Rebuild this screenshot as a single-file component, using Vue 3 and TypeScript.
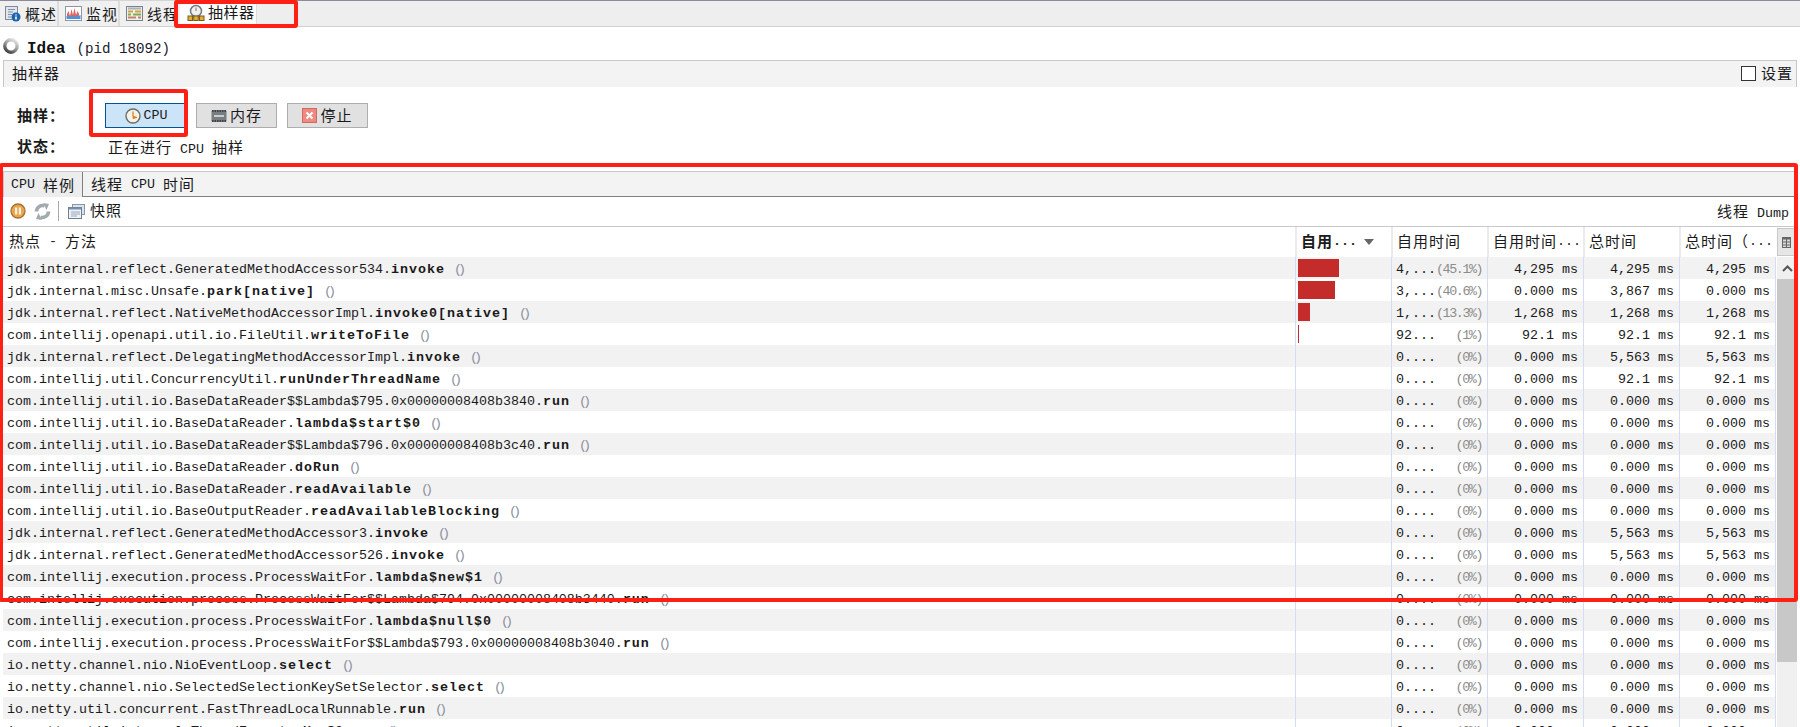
<script setup lang="ts">
interface Row {
  pre: string
  bold: string
  head: string
  pct: string
  bar: number
  self: string
  total: string
  totalCpu: string
}

const Z = '0.000 ms'
function r(pre: string, bold: string, head = '0....', pct = '(0%)', bar = 0, self = Z, total = Z, totalCpu = Z): Row {
  return { pre, bold, head, pct, bar, self, total, totalCpu }
}

const rows: Row[] = [
  r('jdk.internal.reflect.GeneratedMethodAccessor534.', 'invoke', '4,...', '(45.1%)', 41, '4,295 ms', '4,295 ms', '4,295 ms'),
  r('jdk.internal.misc.Unsafe.', 'park[native]', '3,...', '(40.6%)', 37, Z, '3,867 ms', Z),
  r('jdk.internal.reflect.NativeMethodAccessorImpl.', 'invoke0[native]', '1,...', '(13.3%)', 12, '1,268 ms', '1,268 ms', '1,268 ms'),
  r('com.intellij.openapi.util.io.FileUtil.', 'writeToFile', '92...', '(1%)', 1, '92.1 ms', '92.1 ms', '92.1 ms'),
  r('jdk.internal.reflect.DelegatingMethodAccessorImpl.', 'invoke', '0....', '(0%)', 0, Z, '5,563 ms', '5,563 ms'),
  r('com.intellij.util.ConcurrencyUtil.', 'runUnderThreadName', '0....', '(0%)', 0, Z, '92.1 ms', '92.1 ms'),
  r('com.intellij.util.io.BaseDataReader$$Lambda$795.0x00000008408b3840.', 'run'),
  r('com.intellij.util.io.BaseDataReader.', 'lambda$start$0'),
  r('com.intellij.util.io.BaseDataReader$$Lambda$796.0x00000008408b3c40.', 'run'),
  r('com.intellij.util.io.BaseDataReader.', 'doRun'),
  r('com.intellij.util.io.BaseDataReader.', 'readAvailable'),
  r('com.intellij.util.io.BaseOutputReader.', 'readAvailableBlocking'),
  r('jdk.internal.reflect.GeneratedMethodAccessor3.', 'invoke', '0....', '(0%)', 0, Z, '5,563 ms', '5,563 ms'),
  r('jdk.internal.reflect.GeneratedMethodAccessor526.', 'invoke', '0....', '(0%)', 0, Z, '5,563 ms', '5,563 ms'),
  r('com.intellij.execution.process.ProcessWaitFor.', 'lambda$new$1'),
  r('com.intellij.execution.process.ProcessWaitFor$$Lambda$794.0x00000008408b3440.', 'run'),
  r('com.intellij.execution.process.ProcessWaitFor.', 'lambda$null$0'),
  r('com.intellij.execution.process.ProcessWaitFor$$Lambda$793.0x00000008408b3040.', 'run'),
  r('io.netty.channel.nio.NioEventLoop.', 'select'),
  r('io.netty.channel.nio.SelectedSelectionKeySetSelector.', 'select'),
  r('io.netty.util.concurrent.FastThreadLocalRunnable.', 'run'),
  r('io.netty.util.internal.ThreadExecutorMap$2.', 'run'),
]
</script>

<template>
  <div class="page">
    <nav class="tabs">
      <div class="tab">
        <svg width="17" height="17" viewBox="0 0 17 17">
          <rect x="1.5" y="1.5" width="12" height="13" fill="#dfe6ee" stroke="#7d8a99" />
          <path d="M4 4.5h7M4 7h5M4 9.5h4M4 12h3" stroke="#7f8fa3" />
          <circle cx="12" cy="12" r="4.5" fill="#1f62ad" />
          <path d="M12 9.6v1M12 11.4v3" stroke="#fff" stroke-width="1.6" />
        </svg>
        <span class="zh">概述</span>
      </div>
      <div class="tab">
        <svg width="17" height="17" viewBox="0 0 17 17">
          <rect x="0.5" y="1.5" width="16" height="14" fill="#fff" stroke="#8c97a5" />
          <path d="M2 13V9l1.500-3 1.500 5 1.500-7 1.500 6 1.500-7 1.500 7 1.500-4 1.500 3v4z" fill="#e8625a" />
          <path d="M1.500 14v-3l2-1 2 2 2-2 2 2 2-2 2 1 2-1v4z" fill="#4d93d9" />
        </svg>
        <span class="zh">监视</span>
      </div>
      <div class="tab">
        <svg width="17" height="17" viewBox="0 0 17 17">
          <rect x="0.500" y="1.500" width="16" height="14" fill="#eef0ea" stroke="#77828c" />
          <path d="M2 3.500h13" stroke="#aab3bb" stroke-width="2" />
          <path d="M2 6.500h5M9 6.500h6" stroke="#d8a03c" stroke-width="2" />
          <path d="M2 9.500h3M7 9.500h8" stroke="#7cab52" stroke-width="2" />
          <path d="M2 12.500h8M12 12.500h3" stroke="#c9806a" stroke-width="2" />
        </svg>
        <span class="zh">线程</span>
      </div>
      <div class="tab active">
        <svg width="18" height="18" viewBox="0 0 18 18">
          <circle cx="9" cy="7" r="5.500" fill="#eef1f3" stroke="#6f7a85" stroke-width="1.500" />
          <path d="M9 3.500V7" stroke="#d0772a" stroke-width="1.200" />
          <path d="M3 13h12" stroke="#6b5a2a" />
          <rect x="1" y="12" width="4.500" height="4.500" fill="#e3ad3c" stroke="#7c5d14" />
          <rect x="6.750" y="12" width="4.500" height="4.500" fill="#e3ad3c" stroke="#7c5d14" />
          <rect x="12.500" y="12" width="4.500" height="4.500" fill="#e3ad3c" stroke="#7c5d14" />
        </svg>
        <span class="zh">抽样器</span>
      </div>
    </nav>

    <header class="title">
      <svg class="spinner" width="16" height="16" viewBox="0 0 16 16">
        <defs>
          <linearGradient id="ring" x1="0.800" y1="0" x2="0.200" y2="1">
            <stop offset="0" stop-color="#e4e4e4" />
            <stop offset="0.500" stop-color="#9a9a9a" />
            <stop offset="1" stop-color="#3f3f3f" />
          </linearGradient>
        </defs>
        <circle cx="8" cy="8" r="6.200" fill="none" stroke="url(#ring)" stroke-width="3.400" />
      </svg>
      <strong class="app">Idea</strong>
      <span class="pid">(pid 18092)</span>
    </header>

    <section class="section-bar">
      <span class="zh">抽样器</span>
      <label class="settings"><i class="check"></i><span class="zh">设置</span></label>
    </section>

    <section class="controls">
      <span class="label zh">抽样：</span>
      <div class="buttons">
        <button class="btn on">
          <svg width="16" height="16" viewBox="0 0 16 16">
            <circle cx="8" cy="8" r="7" fill="#f5f2e8" stroke="#6c6c66" stroke-width="1.400" />
            <path d="M8 3.500V8l4 1.500-4 1z" fill="#e0782a" stroke="#e0782a" stroke-width="0.800" />
          </svg>
          <span>CPU</span>
        </button>
        <button class="btn">
          <svg width="16" height="16" viewBox="0 0 16 16">
            <rect x="0.500" y="2" width="15" height="12" rx="1.500" fill="#777d80" />
            <path d="M1 3h14" stroke="#3e4244" stroke-width="2" stroke-dasharray="1.500 1" />
            <path d="M1 13h14" stroke="#3e4244" stroke-width="2" stroke-dasharray="1.500 1" />
            <rect x="3" y="7" width="10" height="2" fill="#c9cdcf" />
          </svg>
          <span class="zh">内存</span>
        </button>
        <button class="btn stop">
          <svg width="15" height="15" viewBox="0 0 15 15">
            <rect x="0.500" y="0.500" width="14" height="14" fill="#ee8a80" stroke="#cf6a60" />
            <path d="M4.500 4.500l6 6M10.500 4.500l-6 6" stroke="#fff" stroke-width="2" />
          </svg>
          <span class="zh">停止</span>
        </button>
      </div>
      <span class="label zh">状态：</span>
      <div class="status"><span class="zh">正在进行</span> CPU <span class="zh">抽样</span></div>
    </section>

    <div class="subtabs">
      <div class="subtab selected">CPU <span class="zh">样例</span></div>
      <div class="subtab"><span class="zh">线程</span> CPU <span class="zh">时间</span></div>
    </div>

    <div class="toolbar">
      <svg width="16" height="16" viewBox="0 0 16 16">
        <circle cx="8" cy="8" r="7" fill="#e8a651" stroke="#a9702c" stroke-width="1.300" />
        <rect x="5" y="4.500" width="2.200" height="7" fill="#fdf0dc" />
        <rect x="8.800" y="4.500" width="2.200" height="7" fill="#fdf0dc" />
      </svg>
      <svg class="refresh" width="17" height="17" viewBox="0 0 17 17">
        <path d="M2.500 8.500a6 6 0 0 1 8-5.600" fill="none" stroke="#a3aaad" stroke-width="3.600" />
        <path d="M9 0l6 1-2.500 6z" fill="#a3aaad" />
        <path d="M14.500 8.500a6 6 0 0 1-8 5.600" fill="none" stroke="#a3aaad" stroke-width="3.600" />
        <path d="M8 17l-6-1 2.500-6z" fill="#a3aaad" />
      </svg>
      <i class="sep"></i>
      <svg width="17" height="17" viewBox="0 0 17 17">
        <rect x="4.500" y="1.500" width="12" height="10" fill="#dde3ea" stroke="#8797a8" />
        <rect x="0.500" y="4.500" width="13" height="11" fill="#eef2f6" stroke="#6f8094" />
        <path d="M1 5.500h12" stroke="#7390b0" stroke-width="2" />
        <path d="M3 9h9M3 11h9M3 13h6" stroke="#9aa8b8" />
      </svg>
      <span class="zh snap">快照</span>
      <span class="dump"><span class="zh">线程</span> Dump</span>
    </div>

    <div class="table-head">
      <div class="head-row">
        <div class="hc first"><span class="zh">热点</span> - <span class="zh">方法</span></div>
        <div class="hc sorted"><b class="zh">自用</b><b class="dots">...</b><i class="caret"></i></div>
        <div class="hc"><span class="zh">自用时间</span></div>
        <div class="hc"><span class="zh">自用时间</span>...</div>
        <div class="hc"><span class="zh">总时间</span></div>
        <div class="hc"><span class="zh">总时间</span> <span class="zh">（</span>...</div>
      </div>
      <div class="columns-btn">
        <svg width="9" height="11" viewBox="0 0 9 11">
          <path d="M0 0h9v11H0z" fill="#666" />
          <path d="M1 2.500h3v2H1zM5 2.500h3v2H5zM1 5.500h3v2H1zM5 5.500h3v2H5zM1 8.500h3v1.500H1zM5 8.500h3v1.500H5z" fill="#d8d8d8" />
        </svg>
      </div>
    </div>

    <div class="table-body">
      <div class="rows">
        <div v-for="(row, i) in rows" :key="i" class="row" :class="{ shade: i % 2 === 0 }">
          <div class="cell method">{{ row.pre }}<b>{{ row.bold }}</b><span class="parens">()</span></div>
          <div class="cell barcell"><i v-if="row.bar" class="bar" :style="{ width: row.bar + 'px' }"></i></div>
          <div class="cell selfcell"><span>{{ row.head }}</span><span class="pct">{{ row.pct }}</span></div>
          <div class="cell num">{{ row.self }}</div>
          <div class="cell num">{{ row.total }}</div>
          <div class="cell num">{{ row.totalCpu }}</div>
        </div>
      </div>
      <div class="scrollbar">
        <div class="arrow">
          <svg width="11" height="7" viewBox="0 0 11 7"><path d="M1 6l4.500-4.500L10 6" fill="none" stroke="#555" stroke-width="2" /></svg>
        </div>
        <div class="thumb"></div>
      </div>
    </div>

    <i class="mark mark-tab"></i>
    <i class="mark mark-cpu"></i>
    <i class="mark mark-panel"></i>
  </div>
</template>

<style scoped>
.page {
  position: relative;
  width: 1800px;
  height: 727px;
  overflow: hidden;
  display: flex;
  flex-direction: column;
  background: #fff;
  color: #1a1a1a;
  font-family: "Liberation Mono", "Noto Sans CJK SC", monospace;
  font-size: 13.33px;
  white-space: pre;
}
svg {
  flex: none;
}
.zh {
  font-family: "Noto Sans CJK SC", sans-serif;
  font-size: 15px;
  letter-spacing: 1px;
  font-weight: 400;
  line-height: 20px;
}
.tabs {
  flex: 0 0 27px;
  box-sizing: border-box;
  display: flex;
  align-items: stretch;
  padding-top: 1px;
  border-bottom: 1px solid #d0d0d0;
  background: linear-gradient(to right, #8a8a98 79px, #d4d4d4 79px, #d4d4d4 175px, #8a8a98 175px) top / 100% 1px no-repeat, #eeeeee;
}
.tab {
  flex: none;
  box-sizing: border-box;
  display: flex;
  align-items: center;
  gap: 4px;
  padding: 0 0 0 6px;
  background: #f0f0f0;
  border-right: 2px solid #dcdcdc;
}
.tab .zh {
  margin-top: 1px;
}
.tab:nth-child(1) { width: 59px; padding-left: 4px; }
.tab:nth-child(2) { width: 61px; }
.tab:nth-child(3) { width: 56px; border-right: 0; }
.tab.active {
  margin-left: 4px;
  width: 77px;
  padding: 0 0 3px 7px;
  gap: 3px;
  background: #fff;
  border-right: 1px solid #dcdcdc;
  margin-bottom: -1px;
}
.tab.active .zh {
  margin-top: -1px;
  letter-spacing: 0.5px;
}
.title {
  flex: 0 0 33px;
  display: flex;
  align-items: center;
  padding: 10px 0 0 3px;
  box-sizing: border-box;
  color: #1a1a2a;
}
.spinner {
  margin-top: -5px;
}
.app {
  margin-left: 8px;
  font-size: 16px;
  color: #111;
}
.pid {
  margin-left: 11px;
  font-size: 14.2px;
}
.section-bar {
  flex: 0 0 27px;
  box-sizing: border-box;
  display: flex;
  align-items: center;
  justify-content: space-between;
  margin: 0 3px;
  padding: 0 3px 3px 8px;
  background: #f3f3f3;
  border-top: 1px solid #c8c8c8;
  border-left: 1px solid #c8c8c8;
  border-right: 1px solid #c8c8c8;
}
.settings {
  display: flex;
  align-items: center;
  gap: 5px;
}
.check {
  width: 15px;
  height: 15px;
  box-sizing: border-box;
  border: 1px solid #333;
  background: #fff;
  margin-top: 2px;
}
.controls {
  flex: 0 0 84px;
  box-sizing: border-box;
  padding: 16px 0 13px 17px;
  display: grid;
  grid-template-columns: 88px 1fr;
  grid-template-rows: 25px 22px;
  row-gap: 8px;
  align-items: center;
}
.label {
  font-weight: 700;
  margin-top: -2px;
}
.buttons {
  display: flex;
  gap: 9px;
}
.btn {
  width: 81px;
  height: 25px;
  box-sizing: border-box;
  padding: 0;
  display: flex;
  align-items: center;
  justify-content: center;
  gap: 3px;
  background: #e1e1e1;
  border: 1px solid #adadad;
  font: inherit;
  color: inherit;
}
.btn .zh {
  margin-top: -2px;
}
.btn.stop {
  margin-left: 1px;
}
.btn.on {
  width: 82px;
  background: #cce4f7;
  border-color: #005499;
}
.status {
  padding-left: 3px;
}
.subtabs {
  flex: 0 0 26px;
  box-sizing: border-box;
  display: flex;
  margin-left: 3px;
  background: #f3f3f3;
  border-top: 1px solid #c8c8c8;
  border-bottom: 1px solid #808080;
  margin-right: 6px;
}
.subtab {
  display: flex;
  align-items: center;
  padding: 0 7px 0 8px;
}
.subtab.selected {
  width: 80px;
  box-sizing: border-box;
  padding-left: 7px;
  background: #ededed;
  border-left: 1px solid #c8c8c8;
  border-right: 1px solid #808080;
  margin-bottom: -1px;
}
.toolbar {
  flex: 0 0 30px;
  box-sizing: border-box;
  display: flex;
  align-items: center;
  margin: 0 3px;
  padding: 0 8px 1px 7px;
  border-bottom: 1px solid #c8c8c8;
}
.toolbar .zh {
  margin-top: -2px;
}
.refresh {
  margin-left: 8px;
}
.sep {
  width: 1px;
  height: 20px;
  margin: 0 9px 0 7px;
  background: #a8a8a8;
}
.snap {
  margin-left: 5px;
}
.dump {
  margin-left: auto;
}
.table-head {
  flex: 0 0 30px;
  display: flex;
  padding-left: 3px;
}
.head-row {
  display: grid;
  grid-template-columns: 1292px repeat(5, 96px);
  width: 1772px;
}
.hc {
  display: flex;
  align-items: center;
  box-sizing: border-box;
  padding: 0 0 2px 4px;
  border-left: 2px solid #ebebeb;
}
.hc.first {
  border-left: 0;
  padding-left: 6px;
}
.sorted b.zh {
  font-weight: 700;
}
.dots {
  font-weight: 700;
}
.caret {
  margin: 2px 0 0 7px;
  width: 0;
  height: 0;
  border-left: 5px solid transparent;
  border-right: 5px solid transparent;
  border-top: 6px solid #666;
}
.columns-btn {
  box-sizing: border-box;
  width: 18px;
  height: 28px;
  margin: 1px 0 0 2px;
  display: flex;
  align-items: center;
  justify-content: center;
  background: #e6e6e6;
  border: 1px solid #c8c8c8;
}
.table-body {
  flex: 1;
  min-height: 0;
  display: flex;
  overflow: hidden;
  padding-left: 3px;
}
.rows {
  width: 1773px;
}
.row {
  height: 22px;
  display: grid;
  grid-template-columns: 1292px repeat(5, 96px);
}
.shade .cell {
  background: #f2f2f2;
}
.cell {
  box-sizing: border-box;
  height: 22px;
  line-height: 26px;
  overflow: hidden;
  border-left: 1px solid #d6dcf4;
}
.method {
  border-left: 0;
  padding-left: 4px;
}
.method b {
  letter-spacing: 1px;
}
.parens {
  margin-left: 9px;
  color: #8a8f9e;
  letter-spacing: -4px;
}
.barcell {
  display: flex;
  align-items: center;
  padding-left: 2px;
}
.bar {
  height: 18px;
  background: #c42b2b;
}
.selfcell {
  display: flex;
  justify-content: space-between;
  padding: 0 5px 0 4px;
}
.pct {
  color: #8c8c8c;
  letter-spacing: -1.4px;
}
.num {
  text-align: right;
  padding-right: 5px;
}
.row .cell:last-child {
  border-right: 1px solid #d6dcf4;
  width: 97px;
}
.scrollbar {
  width: 20px;
  margin-left: 1px;
  background: #f0f0f0;
}
.arrow {
  height: 22px;
  display: flex;
  align-items: center;
  justify-content: center;
}
.thumb {
  height: 383px;
  background: #c8c8c8;
}
.mark {
  position: absolute;
  box-sizing: border-box;
  border: 4px solid #ff2015;
  border-radius: 3px;
  pointer-events: none;
}
.mark-tab { left: 174px; top: 0; width: 124px; height: 28px; }
.mark-cpu { left: 89px; top: 89px; width: 99px; height: 48px; }
.mark-panel { left: -1px; top: 163px; width: 1799px; height: 439px; }
</style>

<style>
html, body { margin: 0; padding: 0; background: #fff; }
</style>
